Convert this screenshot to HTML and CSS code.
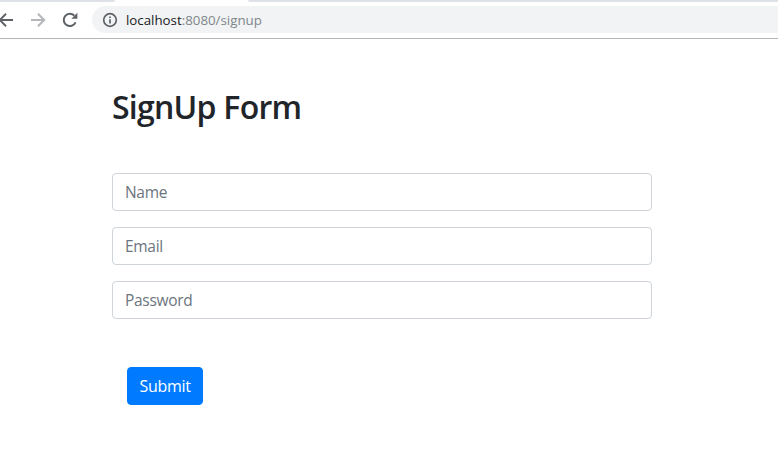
FILE: index.html
```html
<!DOCTYPE html>
<html lang="en">
<head>
<meta charset="utf-8">
<title>SignUp Form</title>
<link rel="stylesheet" href="styles.css">
</head>
<body>
<header class="browser">
  <div class="tabs"><span class="tab-left"></span><span class="tab-right"></span></div>
  <div class="toolbar">
    <svg class="nav back" viewBox="0 0 16 16"><path d="M15 8H1.8M8 1.8L1.8 8 8 14.2"/></svg>
    <svg class="nav forward" viewBox="0 0 16 16"><path d="M1 8h13.2M8 1.8L14.2 8 8 14.2"/></svg>
    <svg class="nav reload" viewBox="0 0 16 16"><path d="M13.6 10.4A6.2 6.2 0 1 1 12.4 3.6"/><path class="fill" d="M9.4 6.8H15.4V.8z"/></svg>
    <div class="omnibox">
      <svg class="info" viewBox="0 0 16 16"><circle cx="8" cy="8" r="6.3"/><path d="M8 7.2v4.2M8 4.4v1.6"/></svg>
      <span class="host">localhost</span><span class="path">:8080/signup</span>
    </div>
  </div>
</header>
<main class="page">
  <h1 class="title">SignUp Form</h1>
  <form class="form">
    <input class="field" type="text" placeholder="Name">
    <input class="field" type="email" placeholder="Email">
    <input class="field" type="password" placeholder="Password">
    <button class="submit" type="button">Submit</button>
  </form>
</main>
</body>
</html>
```
FILE: styles.css
```css
* { box-sizing: border-box; }
html, body { margin: 0; height: 100%; background: #fff; overflow: hidden; }
body { font-family: "Open Sans", "Noto Sans", sans-serif; color: #212529; }

.browser { height: 39px; border-bottom: 1px solid #b4b4b6; display: flex; flex-direction: column; }
.tabs { height: 2px; display: flex; justify-content: space-between; flex: none; }
.tab-left { width: 115px; background: #dee1e6; border-bottom-right-radius: 4px; }
.tab-right { width: 530px; background: #dee1e6; border-bottom-left-radius: 4px; }
.toolbar { flex: 1; display: flex; align-items: flex-start; padding-top: 4px; }

.nav { flex: none; width: 16px; height: 16px; margin-top: 6px; fill: none; stroke-width: 2; }
.back { margin-left: -2px; stroke: #5f6368; }
.forward { margin-left: 16px; stroke: #b4b6b9; }
.reload { margin-left: 16px; stroke: #5f6368; }
.reload .fill { fill: #5f6368; stroke: none; }

.omnibox { flex: 1; height: 27px; margin-left: 14px; background: #f1f3f4; border-radius: 14px 0 0 14px; display: flex; align-items: center; padding-left: 10px; font-size: 13.3px; }
.info { width: 16px; height: 16px; margin-right: 8px; fill: none; stroke: #5f6368; stroke-width: 1.7; }
.host { color: #202124; }
.path { color: #80868b; }

.page { padding: 49px 0 0 112px; width: 652px; }
.title { margin: 0 0 47px; font-size: 32px; font-weight: 600; line-height: 38px; letter-spacing: -.75px; }
.form { display: flex; flex-direction: column; gap: 16px; align-items: flex-start; }
.field { display: block; width: 100%; height: 38px; padding: 6px 12px; font: inherit; font-size: 15.5px; letter-spacing: -.3px; color: #495057; background: #fff; border: 1px solid #ced4da; border-radius: 4px; outline: 0; }
.field::placeholder { color: #6c757d; opacity: 1; }
.submit { margin: 32px 0 0 15px; width: 76px; height: 38px; padding: 0; font: inherit; font-size: 16px; letter-spacing: -.3px; color: #fff; background: #007bff; border: 1px solid #007bff; border-radius: 4px; }
```
